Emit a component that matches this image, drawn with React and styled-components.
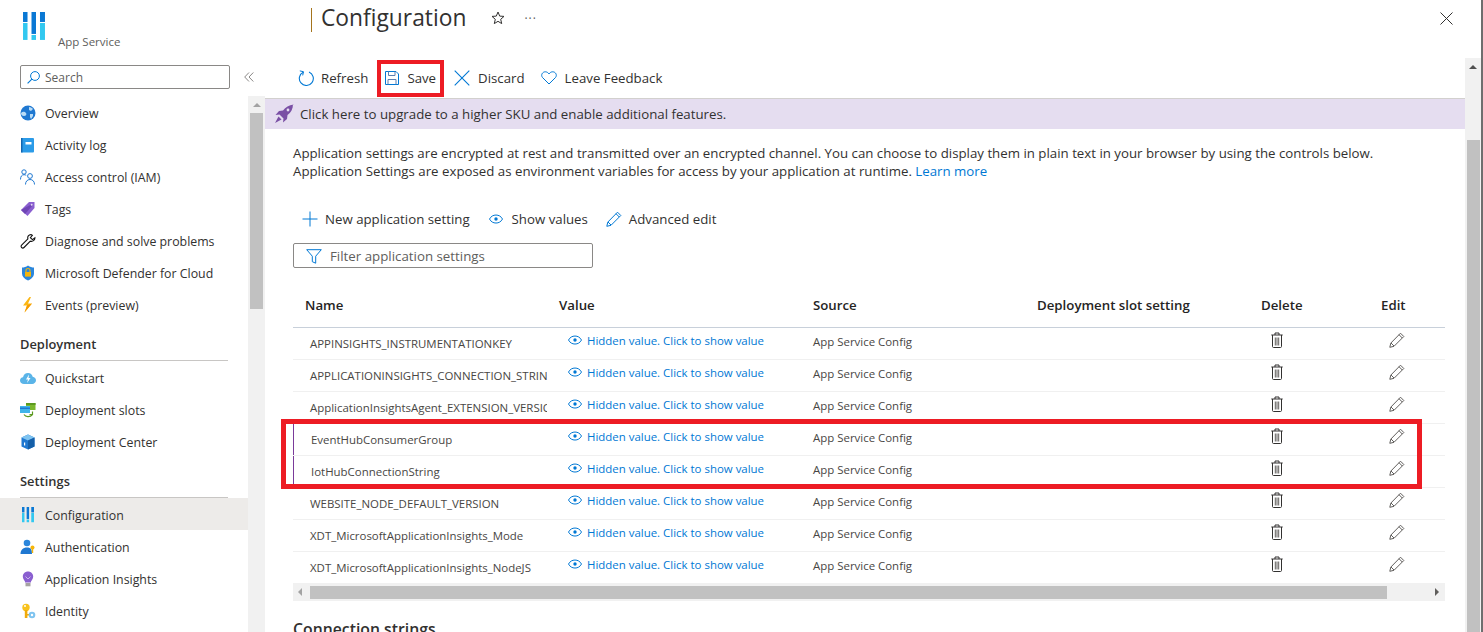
import styled, { createGlobalStyle } from "styled-components";

const GlobalStyle = createGlobalStyle`
  html, body { margin: 0; padding: 0; height: 100%; background: #fff; overflow: hidden; }
  * { box-sizing: border-box; }
  body { font-family: "Open Sans", "Liberation Sans", sans-serif; color: #323130; }
`;

//small svg helper, every icon uses the same viewBox style
const Svg = ({ w = 16, h = 16, vb, children }) => (
  <svg width={w} height={h} viewBox={vb || `0 0 ${w} ${h}`} fill="none" style={{ display: "block", flex: "none" }}>
    {children}
  </svg>
);

//logo bars
const BarsIcon = ({ size = 12 }) => (
  <Svg w={size} h={size * 1.27} vb="0 0 22 28">
    <rect x="0" y="0" width="4.5" height="10" fill="#0a78d4" />
    <rect x="0" y="11" width="4.5" height="17" fill="#32c8f0" />
    <rect x="8.5" y="0" width="4.5" height="22" fill="#0a78d4" />
    <rect x="8.5" y="23" width="4.5" height="5" fill="#32c8f0" />
    <rect x="17" y="0" width="5" height="10" fill="#0a78d4" />
    <rect x="17" y="11" width="5" height="17" fill="#32c8f0" />
  </Svg>
);

const GlobeIcon = () => (
  <Svg>
    <circle cx="8" cy="8" r="7.5" fill="#1f78d1" />
    <path d="M1 8c2-2 4-1 5 0s0 3-2 3-3-1-3-3zM9 2c2 0 3 1 4 2l-2 2-2-1zM10 9l3 0 0 2-2 3-1-2z" fill="#b9dcf6" />
  </Svg>
);
const BookIcon = () => (
  <Svg>
    <rect x="1" y="1" width="13" height="14.5" rx="1" fill="#2b9be8" />
    <rect x="1" y="1" width="1.5" height="14.5" fill="#1366b0" />
    <rect x="5.5" y="5" width="6" height="2.5" fill="#fff" />
  </Svg>
);
const PeopleIcon = () => (
  <Svg>
    <g stroke="#1f78d1" strokeWidth="1">
      <circle cx="4" cy="3" r="2.2" />
      <path d="M.5 10.500c0-3 1.300-4.800 3.500-4.800 1 0 1.600.2 2.200.7" />
      <circle cx="10" cy="7" r="2.4" />
      <path d="M5.500 15.500c0-3 1.800-5 4.500-5s4.500 2 4.500 5" />
    </g>
  </Svg>
);
const TagIcon = () => (
  <Svg>
    <path d="M9 1h5.500v6L7.500 15 1 9z" fill="#8a5fd0" />
    <path d="M1 9l4 4 8-9-1-1z" fill="#6f45b5" />
    <circle cx="11.700" cy="3.800" r="1" fill="#e6dcf5" />
  </Svg>
);
const WrenchIcon = () => (
  <Svg>
    <path d="M10.500 1c-2.200 0-3.700 2-3 4.200L1.200 11.500c-.7.7-.7 1.700 0 2.400.8.700 1.700.7 2.400 0l6.300-6.300c2.400.7 4.700-1 4.600-3.400l-2.500 1.800-2-1.900 2-2.300c-.5-.5-1-.8-1.500-.8z" stroke="#111" strokeWidth="1.100" transform="translate(.4 .6)" />
  </Svg>
);
const ShieldIcon = () => (
  <Svg>
    <path d="M8 .5c2 1.500 4 2 6 2v6c0 3-2.500 5.500-6 7-3.500-1.500-6-4-6-7v-6c2 0 4-.5 6-2z" fill="#2a86dc" />
    <rect x="5" y="7" width="6" height="4.600" fill="#f5b50a" />
    <path d="M6 7V5.500a2 2 0 0 1 4 0V7" stroke="#f5b50a" strokeWidth="1.100" />
  </Svg>
);
const BoltIcon = () => (
  <Svg>
    <path d="M9.500 0L3 8.500h4L4.500 15.500 12 6.500H8L11 0z" fill="#fcb714" />
    <path d="M7 8.500L4.500 15.500 12 6.500z" fill="#f59a00" />
  </Svg>
);
const CloudIcon = () => (
  <Svg>
    <path d="M4 14C1.800 14 0 12.500 0 10.500S1.300 7.500 3 7.300C3.500 4.500 5.500 3 8 3c2.400 0 4.200 1.500 4.700 3.800 1.900.2 3.300 1.700 3.300 3.500 0 2-1.700 3.700-3.800 3.700z" fill="#5ab4e8" />
    <path d="M9 4.500L6 9.500h2L7 13l3.500-5H8.500z" fill="#fff" />
  </Svg>
);
const SlotsIcon = () => (
  <Svg>
    <rect x="6" y="1" width="9.500" height="7" fill="#7cb82f" />
    <rect x="6" y="1" width="9.500" height="2" fill="#5c9a1f" />
    <rect x="0" y="4" width="10" height="7" fill="#3fb4ea" />
    <rect x="0" y="5.500" width="10" height="1.500" fill="#1f78d1" />
    <path d="M4 12.500c1.500 2.500 6 3 8.500 0M12.500 9.500v3h-3" stroke="#5c9a1f" strokeWidth="1.200" />
  </Svg>
);
const CubeIcon = () => (
  <Svg>
    <path d="M8 .5l6.500 3v9L8 15.500 1.500 12.500v-9z" fill="#1f78d1" />
    <path d="M8 .5l6.500 3L8 6.500 1.500 3.500z" fill="#7fc4f0" />
    <path d="M8 6.500v9l6.500-3v-9z" fill="#155fa8" />
    <rect x="4" y="8.500" width="1.200" height="3" fill="#fff" />
  </Svg>
);
const AuthIcon = () => (
  <Svg>
    <circle cx="7" cy="4" r="3.300" fill="#2a86dc" />
    <path d="M.5 15c0-4 2.500-6.500 6.500-6.500s5 2 5 6.500z" fill="#1f78d1" />
    <circle cx="12.500" cy="8.500" r="2" fill="#f5b50a" />
    <rect x="11.800" y="9.500" width="1.400" height="4.500" fill="#f5b50a" />
  </Svg>
);
const BulbIcon = () => (
  <Svg>
    <path d="M8 .5c3 0 5.200 2.200 5.200 5 0 2.200-1.400 3.500-2.200 5v1H5v-1c-.8-1.500-2.200-2.800-2.200-5 0-2.800 2.200-5 5.200-5z" fill="#8a5fd0" />
    <path d="M5.500 5.500L8 8l2.500-2.500" stroke="#d9c9f2" strokeWidth=".8" />
    <rect x="5.500" y="12" width="5" height="3.300" fill="#a5a3a1" />
  </Svg>
);
const KeyIcon = () => (
  <Svg>
    <circle cx="6" cy="4.500" r="3.700" fill="#f8c21c" />
    <rect x="4.800" y="7" width="2.600" height="8" fill="#f0ab0a" />
    <rect x="7" y="11" width="2" height="1.500" fill="#f0ab0a" />
    <circle cx="5" cy="3" r="1" fill="#fff" />
    <circle cx="12" cy="12" r="3.300" fill="#7fc4f0" />
    <circle cx="12" cy="12" r="1.200" fill="#fff" />
  </Svg>
);

const SearchIcon = () => (
  <Svg w={13} h={13}>
    <circle cx="8" cy="5" r="4.400" stroke="#0078d4" />
    <path d="M4.900 8.100L.6 12.400" stroke="#0078d4" strokeWidth="1.100" />
  </Svg>
);
const DoubleChevron = () => (
  <Svg w={10} h={10}>
    <path d="M5 .5L.7 5 5 9.500M9.300 .5L5 5l4.300 4.500" stroke="#8a8886" />
  </Svg>
);
const StarIcon = () => (
  <Svg w={14} h={14}>
    <path d="M7 1l1.700 4.100 4.300.3-3.300 2.900 1 4.300L7 10.300 3.300 12.600l1-4.300L1 5.400l4.300-.3z" stroke="#323130" />
  </Svg>
);
const CloseIcon = () => (
  <Svg w={13} h={13}>
    <path d="M.5 .5l12 12M12.500 .5l-12 12" stroke="#323130" />
  </Svg>
);
const RefreshIcon = () => (
  <Svg>
    <path d="M5.200 2.200A7 7 0 1 0 11 2" stroke="#0078d4" strokeWidth="1.100" />
    <path d="M1.800 1.200l3.700.8-.8 3.700" stroke="#0078d4" strokeWidth="1" transform="translate(0 -.3)" />
  </Svg>
);
const SaveIcon = () => (
  <Svg w={14} h={14}>
    <path d="M.5 .5h10.500l2.500 2.500v10.500H.5z" stroke="#0078d4" />
    <path d="M3.500 .5v4h6.500v-4" stroke="#5c7fb0" />
    <path d="M3 13.500v-5h8v5" stroke="#5c7fb0" />
  </Svg>
);
const DiscardIcon = () => (
  <Svg>
    <path d="M.7 .7l14.600 14.600M15.300 .7L.7 15.300" stroke="#0078d4" strokeWidth="1.100" />
  </Svg>
);
const HeartIcon = () => (
  <Svg w={16} h={14}>
    <path d="M8 13L1.500 6.500C-.5 4 1.500.8 4.300.8 6 .8 7.200 1.800 8 3c.8-1.200 2-2.200 3.700-2.200 2.800 0 4.800 3.200 2.800 5.700z" stroke="#0078d4" />
  </Svg>
);
const RocketIcon = () => (
  <Svg w={20} h={20}>
    <path d="M19.500 .5c-4.500.5-8 2.500-10.500 6L5 7 1.500 11l4-.5 4 4-.5 4 4-3.500.5-4c3.500-2.500 5.500-6 5.500-11z" fill="#7a4fa5" />
    <path d="M4.500 12.500L1 19l6.500-3.500z" fill="#7a4fa5" />
    <circle cx="14" cy="6" r="1.400" fill="#e5ddf0" />
  </Svg>
);
const PlusIcon = () => (
  <Svg>
    <path d="M8 .5v15M.5 8h15" stroke="#0078d4" />
  </Svg>
);
const EyeIcon = ({ size = 14 }) => (
  <Svg w={size} h={size * 0.72} vb="0 0 14 10">
    <path d="M.5 5C2 2.200 4.300 1 7 1s5 1.200 6.500 4c-1.500 2.800-3.800 4-6.500 4S2 7.800.5 5z" stroke="#0078d4" />
    <circle cx="7" cy="5" r="1.700" fill="#0078d4" />
  </Svg>
);
const PenIcon = ({ color = "#0078d4" }) => (
  <Svg>
    <path d="M11.500 1.200l3.300 3.300L5 14.300.8 15.300l1-4.200zM2 11l3 3M10 2.700l3.300 3.300" stroke={color} />
  </Svg>
);
const FunnelIcon = () => (
  <Svg w={16} h={15}>
    <path d="M.7 .7h14.600l-5.600 6.500v7l-3.400-1.500V7.200z" stroke="#0078d4" />
  </Svg>
);
const TrashIcon = () => (
  <Svg w={12} h={16}>
    <path d="M.3 3h11.400M4 3V1h4v2M1.500 3v11.500c0 .6.400 1 1 1h7c.6 0 1-.4 1-1V3" stroke="#323130" />
    <path d="M4.300 5.500v8M6 5.500v8M7.700 5.500v8" stroke="#605e5c" />
  </Svg>
);

const Page = styled.div`
  display: grid;
  grid-template-columns: 265px 1fr 2px;
  height: 632px;
  overflow: hidden;
`;

const Sidebar = styled.aside`
  display: flex;
  flex-direction: column;
  height: 632px;
  overflow: hidden;
`;

const Brand = styled.div`
  display: flex;
  align-items: flex-start;
  height: 65px;
  padding: 12px 0 0 23px;
  gap: 13px;
`;

const BrandName = styled.span`
  font-size: 11.500px;
  line-height: 15px;
  color: #605e5c;
  margin-top: 22px;
`;

const SearchRow = styled.div`
  display: flex;
  padding-left: 20px;
  height: 31px;
  align-items: flex-start;
`;

const SearchBox = styled.div`
  display: flex;
  align-items: center;
  width: 210px;
  height: 24px;
  border: 1px solid #8a8886;
  border-radius: 2px;
  padding-left: 6px;
  gap: 5px;
  font-size: 12px;
  color: #605e5c;
`;

const Collapse = styled.span`
  margin: 7px 0 0 14px;
`;

const SideBody = styled.div`
  display: grid;
  grid-template-columns: 248px 17px;
  flex: 1;
  min-height: 0;
`;

const Nav = styled.nav`
  display: flex;
  flex-direction: column;
  padding-top: 1px;
`;

const NavItem = styled.div`
  display: flex;
  align-items: center;
  flex: none;
  height: 32px;
  padding: ${(p) => (p.$low ? 2 : 0)}px 0 0 20px;
  gap: 9px;
  font-size: 12.350px;
  background: ${(p) => (p.$active ? "#edebe9" : "transparent")};
`;

const NavIcon = styled.span`
  display: flex;
  justify-content: center;
  width: 16px;
`;

const NavHeading = styled.div`
  flex: none;
  margin: 14px 20px ${(p) => p.$bottom}px;
  height: 26px;
  border-bottom: 1px solid #c8c6c4;
  font-size: 12.900px;
  font-weight: 600;
  line-height: 19px;
`;

const ScrollTrackV = styled.div`
  display: flex;
  flex-direction: column;
  align-items: center;
  background: #f1f1f1;
  padding-top: 7px;
`;

const ArrowUp = styled.span`
  width: 0;
  height: 0;
  border-left: 4px solid transparent;
  border-right: 4px solid transparent;
  border-bottom: 4px solid ${(p) => p.$color || "#a3a3a3"};
`;

const ThumbV = styled.div`
  width: 13px;
  height: ${(p) => p.$height}px;
  margin-top: ${(p) => p.$top}px;
  background: #c1c1c1;
`;

const Main = styled.main`
  display: flex;
  flex-direction: column;
  height: 632px;
  min-width: 0;
`;

const TitleBar = styled.header`
  display: flex;
  align-items: flex-start;
  height: 58px;
  padding-left: 46px;
`;

const Title = styled.h1`
  margin: 0;
  font-size: 22.800px;
  font-weight: 400;
  line-height: 36px;
  height: 36px;
  display: flex;
  align-items: center;
`;

const TitleMark = styled.span`
  display: block;
  width: 1px;
  height: 24px;
  background: #a5741d;
  margin: 4px 9px 0 0;
`;

const TitleAction = styled.span`
  display: flex;
  align-items: center;
  height: 36px;
  margin-left: ${(p) => p.$left}px;
  font-size: 12px;
  letter-spacing: 1px;
  color: #605e5c;
`;

const CloseButton = styled.span`
  display: flex;
  align-items: center;
  height: 36px;
  margin-left: auto;
  margin-right: 28px;
`;

const MainBody = styled.div`
  display: grid;
  grid-template-columns: 1fr 16px;
  flex: 1;
  min-height: 0;
`;

const Content = styled.div`
  min-width: 0;
  overflow: hidden;
`;

const Toolbar = styled.div`
  display: flex;
  align-items: center;
  height: 41px;
  padding-left: 33px;
  border-bottom: 1px solid #d2d0ce;
`;

const ToolButton = styled.div`
  display: flex;
  align-items: center;
  gap: ${(p) => p.$gap || 8}px;
  font-size: 13.250px;
  margin-left: ${(p) => p.$left || 0}px;
`;

const SaveButton = styled(ToolButton)`
  height: 37px;
  padding: 0 4px 0 4px;
  border: 4px solid #ed1c24;
`;

const Banner = styled.div`
  display: flex;
  align-items: center;
  height: 30px;
  padding-left: 9px;
  gap: 6px;
  background: #e5ddf0;
  font-size: 13.280px;
`;

const Section = styled.section`
  padding: 15px 20px 0 28px;
`;

const Description = styled.p`
  margin: 0;
  font-size: 13.270px;
  line-height: 18px;
  color: #323130;
`;

const Link = styled.a`
  color: #0078d4;
`;

const Commands = styled.div`
  display: flex;
  align-items: center;
  height: 24px;
  margin-top: 27px;
  padding-left: 9px;
`;

const FilterBox = styled.div`
  display: flex;
  align-items: center;
  width: 300px;
  height: 25px;
  margin-top: 12px;
  border: 1px solid #8a8886;
  border-radius: 2px;
  padding: 1px 0 0 12px;
  gap: 8px;
  font-size: 13.300px;
  color: #605e5c;
`;

const Table = styled.div`
  position: relative;
  width: 1152px;
  margin-top: 21px;
`;

const columns = "254px 254px 224px 224px 120px 76px";

const HeadRow = styled.div`
  display: grid;
  grid-template-columns: ${columns};
  height: 39px;
  padding-top: 6px;
  border-bottom: 1px solid #c8d0da;
  font-size: 13.250px;
  font-weight: 600;
  color: #252423;
`;

const HeadCell = styled.div`
  padding-left: 12px;
  line-height: 20px;
`;

const Row = styled.div`
  display: grid;
  grid-template-columns: ${columns};
  height: 32px;
  border-bottom: 1px solid #f0f0f0;
  font-size: 11.450px;
  color: #484644;
`;

const NameCell = styled.div`
  display: flex;
  align-items: center;
  overflow: hidden;
  white-space: nowrap;
  padding-left: ${(p) => (p.$changed ? 18 : 17)}px;
  box-shadow: ${(p) => (p.$changed ? "inset 1px 0 0 #7a3a9a" : "none")};
`;

const ValueCell = styled.div`
  display: flex;
  align-items: center;
  gap: 5px;
  padding: 0 0 6px 21px;
  color: #0078d4;
`;

const SourceCell = styled.div`
  display: flex;
  align-items: center;
  padding: 0 0 4px 12px;
`;

const IconCell = styled.div`
  display: flex;
  align-items: center;
  padding: 0 0 8px ${(p) => p.$left}px;
`;

const Highlight = styled.div`
  position: absolute;
  left: -12px;
  top: 130px;
  width: 1141px;
  height: 70px;
  border: 5px solid #ed1c24;
  pointer-events: none;
`;

const ScrollTrackH = styled.div`
  display: flex;
  align-items: center;
  height: 18px;
  margin-top: -1px;
  padding: 0 5px;
  background: #f1f1f1;
`;

const ArrowLeft = styled.span`
  width: 0;
  height: 0;
  border-top: 4px solid transparent;
  border-bottom: 4px solid transparent;
  border-right: 4px solid #a3a3a3;
`;

const ArrowRight = styled.span`
  width: 0;
  height: 0;
  margin-left: auto;
  margin-right: 1px;
  border-top: 4px solid transparent;
  border-bottom: 4px solid transparent;
  border-left: 4px solid #605e5c;
`;

const ThumbH = styled.div`
  width: 1077px;
  height: 13px;
  margin-left: 8px;
  background: #c1c1c1;
`;

const SubHeading = styled.h2`
  margin: 18px 0 0;
  font-size: 15.800px;
  font-weight: 600;
  line-height: 20px;
`;

const EdgeLine = styled.div`
  background: #6e6e6e;
`;

const topItems = [
  ["Overview", GlobeIcon],
  ["Activity log", BookIcon],
  ["Access control (IAM)", PeopleIcon],
  ["Tags", TagIcon],
  ["Diagnose and solve problems", WrenchIcon],
  ["Microsoft Defender for Cloud", ShieldIcon],
  ["Events (preview)", BoltIcon],
];
const deployItems = [
  ["Quickstart", CloudIcon],
  ["Deployment slots", SlotsIcon],
  ["Deployment Center", CubeIcon],
];
const settingItems = [
  ["Configuration", BarsIcon, true],
  ["Authentication", AuthIcon],
  ["Application Insights", BulbIcon],
  ["Identity", KeyIcon],
];

const settings = [
  { name: "APPINSIGHTS_INSTRUMENTATIONKEY" },
  { name: "APPLICATIONINSIGHTS_CONNECTION_STRING" },
  { name: "ApplicationInsightsAgent_EXTENSION_VERSION" },
  { name: "EventHubConsumerGroup", changed: true },
  { name: "IotHubConnectionString", changed: true },
  { name: "WEBSITE_NODE_DEFAULT_VERSION" },
  { name: "XDT_MicrosoftApplicationInsights_Mode" },
  { name: "XDT_MicrosoftApplicationInsights_NodeJS" },
];

const renderItems = (items, low) =>
  items.map(([label, Icon, active]) => (
    <NavItem key={label} $active={active} $low={low}>
      <NavIcon>
        <Icon />
      </NavIcon>
      {label}
    </NavItem>
  ));

export default function App() {
  return (
    <Page>
      <GlobalStyle />
      <Sidebar>
        <Brand>
          <BarsIcon size={22} />
          <BrandName>App Service</BrandName>
        </Brand>
        <SearchRow>
          <SearchBox>
            <SearchIcon />
            Search
          </SearchBox>
          <Collapse>
            <DoubleChevron />
          </Collapse>
        </SearchRow>
        <SideBody>
          <Nav>
            {renderItems(topItems)}
            <NavHeading $bottom={1}>Deployment</NavHeading>
            {renderItems(deployItems)}
            <NavHeading $bottom={0}>Settings</NavHeading>
            {renderItems(settingItems, true)}
          </Nav>
          <ScrollTrackV>
            <ArrowUp />
            <ThumbV $top={6} $height={196} />
          </ScrollTrackV>
        </SideBody>
      </Sidebar>

      <Main>
        <TitleBar>
          <Title>
            <TitleMark />
            Configuration
          </Title>
          <TitleAction $left={25}>
            <StarIcon />
          </TitleAction>
          <TitleAction $left={19}>···</TitleAction>
          <CloseButton>
            <CloseIcon />
          </CloseButton>
        </TitleBar>
        <MainBody>
          <Content>
            <Toolbar>
              <ToolButton $gap={7}>
                <RefreshIcon />
                Refresh
              </ToolButton>
              <SaveButton $left={9}>
                <SaveIcon />
                Save
              </SaveButton>
              <ToolButton $left={10}>
                <DiscardIcon />
                Discard
              </ToolButton>
              <ToolButton $left={16}>
                <HeartIcon />
                Leave Feedback
              </ToolButton>
            </Toolbar>
            <Banner>
              <RocketIcon />
              Click here to upgrade to a higher SKU and enable additional features.
            </Banner>
            <Section>
              <Description>
                Application settings are encrypted at rest and transmitted over an encrypted channel. You can choose to display them in plain text in your browser by using the controls below.
                <br />
                Application Settings are exposed as environment variables for access by your application at runtime. <Link>Learn more</Link>
              </Description>
              <Commands>
                <ToolButton $gap={7}>
                  <PlusIcon />
                  New application setting
                </ToolButton>
                <ToolButton $left={19} $gap={9}>
                  <EyeIcon />
                  Show values
                </ToolButton>
                <ToolButton $left={18} $gap={7}>
                  <PenIcon />
                  Advanced edit
                </ToolButton>
              </Commands>
              <FilterBox>
                <FunnelIcon />
                Filter application settings
              </FilterBox>
              <Table>
                <HeadRow>
                  <HeadCell>Name</HeadCell>
                  <HeadCell>Value</HeadCell>
                  <HeadCell>Source</HeadCell>
                  <HeadCell>Deployment slot setting</HeadCell>
                  <HeadCell>Delete</HeadCell>
                  <HeadCell>Edit</HeadCell>
                </HeadRow>
                {settings.map((s) => (
                  <Row key={s.name}>
                    <NameCell $changed={s.changed}>{s.name}</NameCell>
                    <ValueCell>
                      <EyeIcon />
                      Hidden value. Click to show value
                    </ValueCell>
                    <SourceCell>App Service Config</SourceCell>
                    <div />
                    <IconCell $left={22}>
                      <TrashIcon />
                    </IconCell>
                    <IconCell $left={20}>
                      <PenIcon color="#605e5c" />
                    </IconCell>
                  </Row>
                ))}
                <Highlight />
                <ScrollTrackH>
                  <ArrowLeft />
                  <ThumbH />
                  <ArrowRight />
                </ScrollTrackH>
              </Table>
              <SubHeading>Connection strings</SubHeading>
            </Section>
          </Content>
          <ScrollTrackV>
            <ArrowUp $color="#505050" />
            <ThumbV $top={71} $height={500} />
          </ScrollTrackV>
        </MainBody>
      </Main>
      <EdgeLine />
    </Page>
  );
}
